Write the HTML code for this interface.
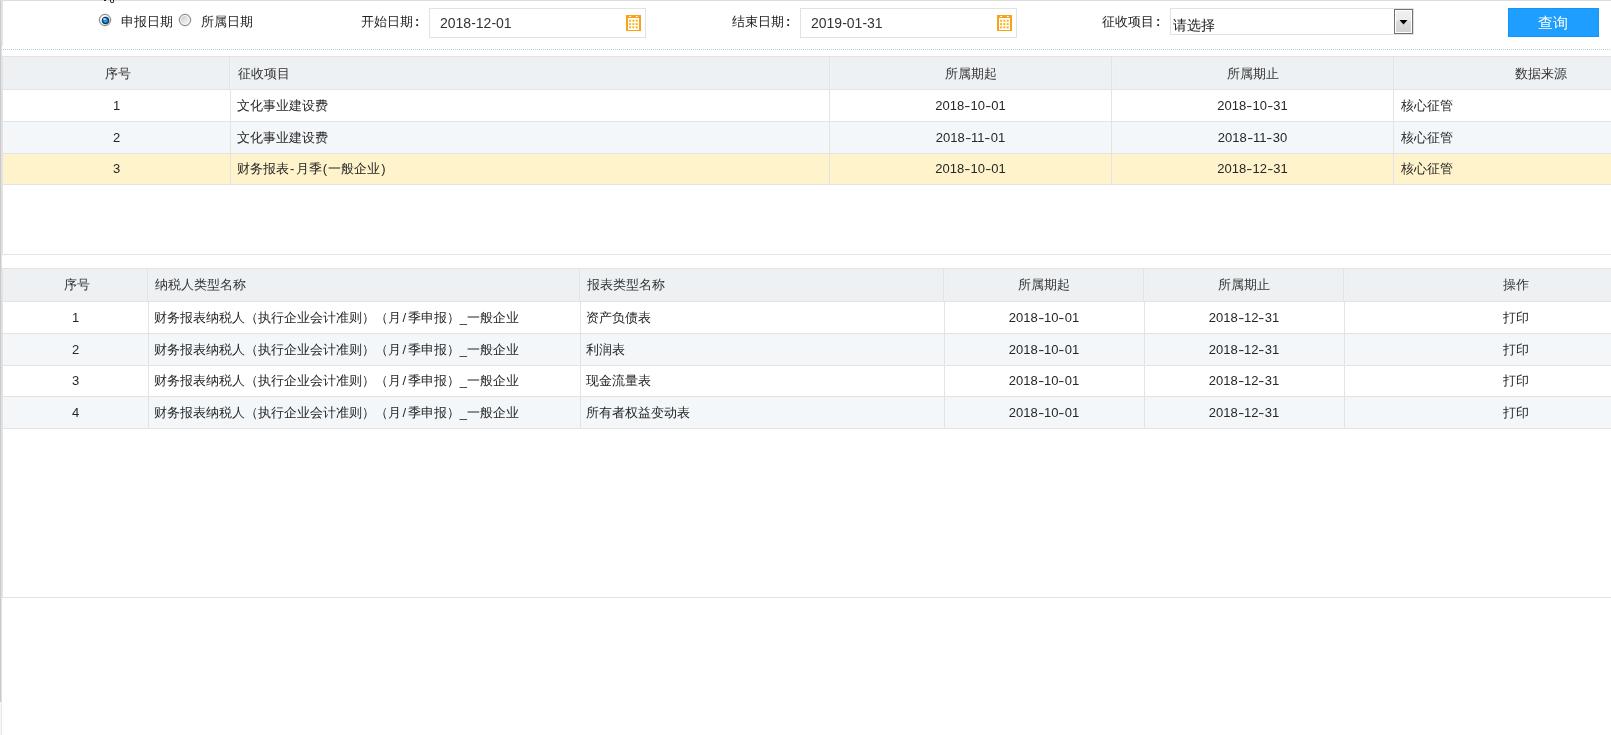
<!DOCTYPE html>
<html><head><meta charset="utf-8"><style>
html,body{margin:0;padding:0;width:1611px;height:735px;overflow:hidden;background:#fff;position:relative;font-family:"Liberation Sans",sans-serif}
.t{position:absolute;white-space:nowrap;overflow:visible}
#txt{position:absolute;left:0;top:0;width:1611px;height:735px;will-change:transform}
</style></head><body>
<div style="position:absolute;left:0px;top:0px;width:1px;height:702px;background:#cbcbcb"></div>
<div style="position:absolute;left:1px;top:0px;width:1px;height:702px;background:#e0e0e0"></div>
<div style="position:absolute;left:0px;top:702px;width:1px;height:33px;background:#f3f7fb"></div>
<div style="position:absolute;left:1px;top:702px;width:1px;height:33px;background:#e6e6e6"></div>
<div style="position:absolute;left:0px;top:0px;width:1611px;height:1px;background:#dcdcdc"></div>
<div style="position:absolute;left:2px;top:1px;width:1px;height:45px;background:#e6e6e6"></div>
<div style="position:absolute;left:3px;top:49px;width:1608px;height:1px;background:repeating-linear-gradient(90deg,#b2ced5 0 1px,transparent 1px 2px)"></div>
<div style="position:absolute;left:104px;top:0px;width:2px;height:1px;background:#1a1a30"></div>
<div style="position:absolute;left:110px;top:0px;width:4px;height:3px;border:1px solid #1a1a30;border-top:none;border-radius:0 0 2px 2px;box-sizing:border-box"></div>
<div style="position:absolute;left:99px;top:14px;width:12px;height:12px;border-radius:50%;box-sizing:border-box;border:1px solid #858585;background:#fff;box-shadow:0 0 0 0.5px rgba(130,130,130,.35)"></div>
<div style="position:absolute;left:100.5px;top:15.5px;width:9px;height:9px;border-radius:50%;background:radial-gradient(circle at 50% 50%,#1c8fe0 0,#2aa6f0 1.6px,#1b84d6 2.1px,#0d3a66 2.5px,#0c355e 3.4px,rgba(12,53,94,.35) 3.9px,transparent 4.4px)"></div>
<div style="position:absolute;left:103px;top:17.5px;width:2.5px;height:2px;border-radius:50%;background:rgba(200,240,255,.8)"></div>
<div style="position:absolute;left:179px;top:14px;width:12px;height:12px;border-radius:50%;box-sizing:border-box;border:1px solid #858585;box-shadow:0 0 0 0.5px rgba(130,130,130,.35);background:#fff"></div>
<div style="position:absolute;left:181px;top:16px;width:8px;height:8px;border-radius:50%;background:linear-gradient(135deg,#c3c8d1 0,#dfe2e6 45%,#f7f7f7 100%)"></div>
<div style="position:absolute;left:429px;top:8px;width:217px;height:30px;box-sizing:border-box;border:1px solid #e2e2e2;background:#fff"></div>
<svg style="position:absolute;left:626px;top:15px" width="15" height="16" viewBox="0 0 15 16">
<rect x="0" y="0" width="15" height="16" fill="#f8a21c"/>
<rect x="2" y="3" width="11" height="12" fill="#fff"/>
<rect x="3.3" y="1" width="1.8" height="1" fill="#fff"/><rect x="9.9" y="1" width="1.8" height="1" fill="#fff"/>
<g fill="#fab51c">
<rect x="3.1" y="4.7" width="2" height="2"/><rect x="6.4" y="4.7" width="2" height="2"/><rect x="9.7" y="4.7" width="2" height="2"/>
<rect x="3.1" y="8.1" width="2" height="2"/><rect x="6.4" y="8.1" width="2" height="2"/><rect x="9.7" y="8.1" width="2" height="2"/>
<rect x="3.1" y="11.4" width="2" height="2"/><rect x="6.4" y="11.4" width="2" height="2"/><rect x="9.7" y="11.4" width="2" height="2"/>
</g></svg>
<div style="position:absolute;left:800px;top:8px;width:217px;height:30px;box-sizing:border-box;border:1px solid #e2e2e2;background:#fff"></div>
<svg style="position:absolute;left:997px;top:15px" width="15" height="16" viewBox="0 0 15 16">
<rect x="0" y="0" width="15" height="16" fill="#f8a21c"/>
<rect x="2" y="3" width="11" height="12" fill="#fff"/>
<rect x="3.3" y="1" width="1.8" height="1" fill="#fff"/><rect x="9.9" y="1" width="1.8" height="1" fill="#fff"/>
<g fill="#fab51c">
<rect x="3.1" y="4.7" width="2" height="2"/><rect x="6.4" y="4.7" width="2" height="2"/><rect x="9.7" y="4.7" width="2" height="2"/>
<rect x="3.1" y="8.1" width="2" height="2"/><rect x="6.4" y="8.1" width="2" height="2"/><rect x="9.7" y="8.1" width="2" height="2"/>
<rect x="3.1" y="11.4" width="2" height="2"/><rect x="6.4" y="11.4" width="2" height="2"/><rect x="9.7" y="11.4" width="2" height="2"/>
</g></svg>
<div style="position:absolute;left:1170px;top:8px;width:244px;height:27px;box-sizing:border-box;border:1px solid #e2e2e2;background:#fff"></div>
<div style="position:absolute;left:1394px;top:9px;width:19px;height:25px;box-sizing:border-box;border:1px solid #707070;background:#fff"></div>
<div style="position:absolute;left:1396px;top:11px;width:15px;height:21px;background:linear-gradient(#efefef 0,#ececec 50%,#dcdcdc 50%,#d2d2d2 100%)"></div>
<svg style="position:absolute;left:1399px;top:20px" width="9" height="5" viewBox="0 0 9 5"><path d="M0.5 0 H8.5 L4.5 4.5 Z" fill="#000"/></svg>
<div style="position:absolute;left:1508px;top:8px;width:91px;height:29px;background:#1e9efe;box-sizing:border-box;border:1px solid #1497fd"></div>
<div style="position:absolute;left:2px;top:56px;width:1700px;height:199px;box-sizing:border-box;border:1px solid #e3e3e3;background:#fff"></div>
<div style="position:absolute;left:3px;top:57px;width:1700px;height:32px;background:#edf1f4"></div>
<div style="position:absolute;left:3px;top:89px;width:1700px;height:1px;background:#e3e3e3"></div>
<div style="position:absolute;left:229px;top:57px;width:1px;height:32px;background:#e3e3e3"></div>
<div style="position:absolute;left:230px;top:57px;width:1px;height:32px;background:#f0f3f6"></div>
<div style="position:absolute;left:829px;top:57px;width:1px;height:32px;background:#e3e3e3"></div>
<div style="position:absolute;left:830px;top:57px;width:1px;height:32px;background:#f0f3f6"></div>
<div style="position:absolute;left:1111px;top:57px;width:1px;height:32px;background:#e3e3e3"></div>
<div style="position:absolute;left:1112px;top:57px;width:1px;height:32px;background:#f0f3f6"></div>
<div style="position:absolute;left:1393px;top:57px;width:1px;height:32px;background:#e3e3e3"></div>
<div style="position:absolute;left:1394px;top:57px;width:1px;height:32px;background:#f0f3f6"></div>
<div style="position:absolute;left:3px;top:90px;width:1700px;height:31px;background:#fff"></div>
<div style="position:absolute;left:3px;top:121px;width:1700px;height:1px;background:#e3e3e3"></div>
<div style="position:absolute;left:230px;top:90px;width:1px;height:31px;background:#e3e3e3"></div>
<div style="position:absolute;left:829px;top:90px;width:1px;height:31px;background:#e3e3e3"></div>
<div style="position:absolute;left:1111px;top:90px;width:1px;height:31px;background:#e3e3e3"></div>
<div style="position:absolute;left:1393px;top:90px;width:1px;height:31px;background:#e3e3e3"></div>
<div style="position:absolute;left:3px;top:122px;width:1700px;height:31px;background:#f3f7fa"></div>
<div style="position:absolute;left:3px;top:153px;width:1700px;height:1px;background:#e3e3e3"></div>
<div style="position:absolute;left:230px;top:122px;width:1px;height:31px;background:#e3e3e3"></div>
<div style="position:absolute;left:829px;top:122px;width:1px;height:31px;background:#e3e3e3"></div>
<div style="position:absolute;left:1111px;top:122px;width:1px;height:31px;background:#e3e3e3"></div>
<div style="position:absolute;left:1393px;top:122px;width:1px;height:31px;background:#e3e3e3"></div>
<div style="position:absolute;left:3px;top:154px;width:1700px;height:30px;background:#fef3cb"></div>
<div style="position:absolute;left:3px;top:184px;width:1700px;height:1px;background:#e3e3e3"></div>
<div style="position:absolute;left:230px;top:154px;width:1px;height:30px;background:#e3e3e3"></div>
<div style="position:absolute;left:829px;top:154px;width:1px;height:30px;background:#e3e3e3"></div>
<div style="position:absolute;left:1111px;top:154px;width:1px;height:30px;background:#e3e3e3"></div>
<div style="position:absolute;left:1393px;top:154px;width:1px;height:30px;background:#e3e3e3"></div>
<div style="position:absolute;left:2px;top:268px;width:1700px;height:330px;box-sizing:border-box;border:1px solid #e3e3e3;background:#fff"></div>
<div style="position:absolute;left:3px;top:269px;width:1700px;height:32px;background:#edf1f4"></div>
<div style="position:absolute;left:3px;top:301px;width:1700px;height:1px;background:#e3e3e3"></div>
<div style="position:absolute;left:147px;top:269px;width:1px;height:32px;background:#e3e3e3"></div>
<div style="position:absolute;left:148px;top:269px;width:1px;height:32px;background:#f0f3f6"></div>
<div style="position:absolute;left:579px;top:269px;width:1px;height:32px;background:#e3e3e3"></div>
<div style="position:absolute;left:580px;top:269px;width:1px;height:32px;background:#f0f3f6"></div>
<div style="position:absolute;left:943px;top:269px;width:1px;height:32px;background:#e3e3e3"></div>
<div style="position:absolute;left:944px;top:269px;width:1px;height:32px;background:#f0f3f6"></div>
<div style="position:absolute;left:1143px;top:269px;width:1px;height:32px;background:#e3e3e3"></div>
<div style="position:absolute;left:1144px;top:269px;width:1px;height:32px;background:#f0f3f6"></div>
<div style="position:absolute;left:1343px;top:269px;width:1px;height:32px;background:#e3e3e3"></div>
<div style="position:absolute;left:1344px;top:269px;width:1px;height:32px;background:#f0f3f6"></div>
<div style="position:absolute;left:3px;top:302px;width:1700px;height:31px;background:#fff"></div>
<div style="position:absolute;left:3px;top:333px;width:1700px;height:1px;background:#e3e3e3"></div>
<div style="position:absolute;left:148px;top:302px;width:1px;height:31px;background:#e3e3e3"></div>
<div style="position:absolute;left:580px;top:302px;width:1px;height:31px;background:#e3e3e3"></div>
<div style="position:absolute;left:944px;top:302px;width:1px;height:31px;background:#e3e3e3"></div>
<div style="position:absolute;left:1144px;top:302px;width:1px;height:31px;background:#e3e3e3"></div>
<div style="position:absolute;left:1344px;top:302px;width:1px;height:31px;background:#e3e3e3"></div>
<div style="position:absolute;left:3px;top:334px;width:1700px;height:31px;background:#f3f7fa"></div>
<div style="position:absolute;left:3px;top:365px;width:1700px;height:1px;background:#e3e3e3"></div>
<div style="position:absolute;left:148px;top:334px;width:1px;height:31px;background:#e3e3e3"></div>
<div style="position:absolute;left:580px;top:334px;width:1px;height:31px;background:#e3e3e3"></div>
<div style="position:absolute;left:944px;top:334px;width:1px;height:31px;background:#e3e3e3"></div>
<div style="position:absolute;left:1144px;top:334px;width:1px;height:31px;background:#e3e3e3"></div>
<div style="position:absolute;left:1344px;top:334px;width:1px;height:31px;background:#e3e3e3"></div>
<div style="position:absolute;left:3px;top:366px;width:1700px;height:30px;background:#fff"></div>
<div style="position:absolute;left:3px;top:396px;width:1700px;height:1px;background:#e3e3e3"></div>
<div style="position:absolute;left:148px;top:366px;width:1px;height:30px;background:#e3e3e3"></div>
<div style="position:absolute;left:580px;top:366px;width:1px;height:30px;background:#e3e3e3"></div>
<div style="position:absolute;left:944px;top:366px;width:1px;height:30px;background:#e3e3e3"></div>
<div style="position:absolute;left:1144px;top:366px;width:1px;height:30px;background:#e3e3e3"></div>
<div style="position:absolute;left:1344px;top:366px;width:1px;height:30px;background:#e3e3e3"></div>
<div style="position:absolute;left:3px;top:397px;width:1700px;height:31px;background:#f3f7fa"></div>
<div style="position:absolute;left:3px;top:428px;width:1700px;height:1px;background:#e3e3e3"></div>
<div style="position:absolute;left:148px;top:397px;width:1px;height:31px;background:#e3e3e3"></div>
<div style="position:absolute;left:580px;top:397px;width:1px;height:31px;background:#e3e3e3"></div>
<div style="position:absolute;left:944px;top:397px;width:1px;height:31px;background:#e3e3e3"></div>
<div style="position:absolute;left:1144px;top:397px;width:1px;height:31px;background:#e3e3e3"></div>
<div style="position:absolute;left:1344px;top:397px;width:1px;height:31px;background:#e3e3e3"></div>
<div id="txt">
<div class="t" style="left:121px;top:10px;width:60px;height:24px;line-height:24px;text-align:left;font-size:13px;color:#222">申报日期</div>
<div class="t" style="left:201px;top:10px;width:60px;height:24px;line-height:24px;text-align:left;font-size:13px;color:#222">所属日期</div>
<div class="t" style="left:361px;top:10px;width:70px;height:24px;line-height:24px;text-align:left;font-size:13px;color:#222">开始日期<span style="padding-left:2px;font-weight:bold">:</span></div>
<div class="t" style="left:732px;top:10px;width:70px;height:24px;line-height:24px;text-align:left;font-size:13px;color:#222">结束日期<span style="padding-left:2px;font-weight:bold">:</span></div>
<div class="t" style="left:1102px;top:10px;width:70px;height:24px;line-height:24px;text-align:left;font-size:13px;color:#222">征收项目<span style="padding-left:2px;font-weight:bold">:</span></div>
<div class="t" style="left:440px;top:9px;width:150px;height:28px;line-height:28px;text-align:left;font-size:14px;color:#333">2018-12-01</div>
<div class="t" style="left:811px;top:9px;width:150px;height:28px;line-height:28px;text-align:left;font-size:14px;color:#333">2019-01-31</div>
<div class="t" style="left:1173px;top:13px;width:100px;height:24px;line-height:24px;text-align:left;font-size:14px;color:#222">请选择</div>
<div class="t" style="left:1507px;top:8px;width:91px;height:29px;line-height:29px;text-align:center;font-size:15px;color:#fff">查询</div>
<div class="t" style="left:5px;top:58px;width:226px;height:32px;line-height:32px;text-align:center;font-size:13px;color:#333">序号</div>
<div class="t" style="left:238px;top:58px;width:400px;height:32px;line-height:32px;text-align:left;font-size:13px;color:#333">征收项目</div>
<div class="t" style="left:830px;top:58px;width:281px;height:32px;line-height:32px;text-align:center;font-size:13px;color:#333">所属期起</div>
<div class="t" style="left:1112px;top:58px;width:281px;height:32px;line-height:32px;text-align:center;font-size:13px;color:#333">所属期止</div>
<div class="t" style="left:1394px;top:58px;width:293px;height:32px;line-height:32px;text-align:center;font-size:13px;color:#333">数据来源</div>
<div class="t" style="left:3px;top:90px;width:227px;height:31px;line-height:31px;text-align:center;font-size:13px;color:#262626">1</div>
<div class="t" style="left:237px;top:90px;width:500px;height:31px;line-height:31px;text-align:left;font-size:13px;color:#262626">文化事业建设费</div>
<div class="t" style="left:830px;top:90px;width:281px;height:31px;line-height:31px;text-align:center;font-size:13px;color:#262626">2018<span style="display:inline-block;margin:0 1px;transform:scaleX(1.4)">-</span>10<span style="display:inline-block;margin:0 1px;transform:scaleX(1.4)">-</span>01</div>
<div class="t" style="left:1112px;top:90px;width:281px;height:31px;line-height:31px;text-align:center;font-size:13px;color:#262626">2018<span style="display:inline-block;margin:0 1px;transform:scaleX(1.4)">-</span>10<span style="display:inline-block;margin:0 1px;transform:scaleX(1.4)">-</span>31</div>
<div class="t" style="left:1401px;top:90px;width:200px;height:31px;line-height:31px;text-align:left;font-size:13px;color:#262626">核心征管</div>
<div class="t" style="left:3px;top:122px;width:227px;height:31px;line-height:31px;text-align:center;font-size:13px;color:#262626">2</div>
<div class="t" style="left:237px;top:122px;width:500px;height:31px;line-height:31px;text-align:left;font-size:13px;color:#262626">文化事业建设费</div>
<div class="t" style="left:830px;top:122px;width:281px;height:31px;line-height:31px;text-align:center;font-size:13px;color:#262626">2018<span style="display:inline-block;margin:0 1px;transform:scaleX(1.4)">-</span>11<span style="display:inline-block;margin:0 1px;transform:scaleX(1.4)">-</span>01</div>
<div class="t" style="left:1112px;top:122px;width:281px;height:31px;line-height:31px;text-align:center;font-size:13px;color:#262626">2018<span style="display:inline-block;margin:0 1px;transform:scaleX(1.4)">-</span>11<span style="display:inline-block;margin:0 1px;transform:scaleX(1.4)">-</span>30</div>
<div class="t" style="left:1401px;top:122px;width:200px;height:31px;line-height:31px;text-align:left;font-size:13px;color:#262626">核心征管</div>
<div class="t" style="left:3px;top:154px;width:227px;height:30px;line-height:30px;text-align:center;font-size:13px;color:#262626">3</div>
<div class="t" style="left:237px;top:154px;width:500px;height:30px;line-height:30px;text-align:left;font-size:13px;color:#262626">财务报表<span style="padding:0 1.1px">-</span>月季<span style="padding:0 1.1px">(</span>一般企业<span style="padding:0 1.1px">)</span></div>
<div class="t" style="left:830px;top:154px;width:281px;height:30px;line-height:30px;text-align:center;font-size:13px;color:#262626">2018<span style="display:inline-block;margin:0 1px;transform:scaleX(1.4)">-</span>10<span style="display:inline-block;margin:0 1px;transform:scaleX(1.4)">-</span>01</div>
<div class="t" style="left:1112px;top:154px;width:281px;height:30px;line-height:30px;text-align:center;font-size:13px;color:#262626">2018<span style="display:inline-block;margin:0 1px;transform:scaleX(1.4)">-</span>12<span style="display:inline-block;margin:0 1px;transform:scaleX(1.4)">-</span>31</div>
<div class="t" style="left:1401px;top:154px;width:200px;height:30px;line-height:30px;text-align:left;font-size:13px;color:#262626">核心征管</div>
<div class="t" style="left:5px;top:269px;width:144px;height:32px;line-height:32px;text-align:center;font-size:13px;color:#333">序号</div>
<div class="t" style="left:155px;top:269px;width:400px;height:32px;line-height:32px;text-align:left;font-size:13px;color:#333">纳税人类型名称</div>
<div class="t" style="left:587px;top:269px;width:300px;height:32px;line-height:32px;text-align:left;font-size:13px;color:#333">报表类型名称</div>
<div class="t" style="left:944px;top:269px;width:199px;height:32px;line-height:32px;text-align:center;font-size:13px;color:#333">所属期起</div>
<div class="t" style="left:1144px;top:269px;width:199px;height:32px;line-height:32px;text-align:center;font-size:13px;color:#333">所属期止</div>
<div class="t" style="left:1344px;top:269px;width:343px;height:32px;line-height:32px;text-align:center;font-size:13px;color:#333">操作</div>
<div class="t" style="left:3px;top:302px;width:145px;height:31px;line-height:31px;text-align:center;font-size:13px;color:#262626">1</div>
<div class="t" style="left:154px;top:302px;width:420px;height:31px;line-height:31px;text-align:left;font-size:13px;color:#262626">财务报表纳税人（执行企业会计准则）（月<span style="padding:0 1.5px">/</span>季申报）_一般企业</div>
<div class="t" style="left:586px;top:302px;width:300px;height:31px;line-height:31px;text-align:left;font-size:13px;color:#262626">资产负债表</div>
<div class="t" style="left:944px;top:302px;width:200px;height:31px;line-height:31px;text-align:center;font-size:13px;color:#262626">2018<span style="display:inline-block;margin:0 1px;transform:scaleX(1.4)">-</span>10<span style="display:inline-block;margin:0 1px;transform:scaleX(1.4)">-</span>01</div>
<div class="t" style="left:1144px;top:302px;width:200px;height:31px;line-height:31px;text-align:center;font-size:13px;color:#262626">2018<span style="display:inline-block;margin:0 1px;transform:scaleX(1.4)">-</span>12<span style="display:inline-block;margin:0 1px;transform:scaleX(1.4)">-</span>31</div>
<div class="t" style="left:1344px;top:302px;width:343px;height:31px;line-height:31px;text-align:center;font-size:13px;color:#262626">打印</div>
<div class="t" style="left:3px;top:334px;width:145px;height:31px;line-height:31px;text-align:center;font-size:13px;color:#262626">2</div>
<div class="t" style="left:154px;top:334px;width:420px;height:31px;line-height:31px;text-align:left;font-size:13px;color:#262626">财务报表纳税人（执行企业会计准则）（月<span style="padding:0 1.5px">/</span>季申报）_一般企业</div>
<div class="t" style="left:586px;top:334px;width:300px;height:31px;line-height:31px;text-align:left;font-size:13px;color:#262626">利润表</div>
<div class="t" style="left:944px;top:334px;width:200px;height:31px;line-height:31px;text-align:center;font-size:13px;color:#262626">2018<span style="display:inline-block;margin:0 1px;transform:scaleX(1.4)">-</span>10<span style="display:inline-block;margin:0 1px;transform:scaleX(1.4)">-</span>01</div>
<div class="t" style="left:1144px;top:334px;width:200px;height:31px;line-height:31px;text-align:center;font-size:13px;color:#262626">2018<span style="display:inline-block;margin:0 1px;transform:scaleX(1.4)">-</span>12<span style="display:inline-block;margin:0 1px;transform:scaleX(1.4)">-</span>31</div>
<div class="t" style="left:1344px;top:334px;width:343px;height:31px;line-height:31px;text-align:center;font-size:13px;color:#262626">打印</div>
<div class="t" style="left:3px;top:366px;width:145px;height:30px;line-height:30px;text-align:center;font-size:13px;color:#262626">3</div>
<div class="t" style="left:154px;top:366px;width:420px;height:30px;line-height:30px;text-align:left;font-size:13px;color:#262626">财务报表纳税人（执行企业会计准则）（月<span style="padding:0 1.5px">/</span>季申报）_一般企业</div>
<div class="t" style="left:586px;top:366px;width:300px;height:30px;line-height:30px;text-align:left;font-size:13px;color:#262626">现金流量表</div>
<div class="t" style="left:944px;top:366px;width:200px;height:30px;line-height:30px;text-align:center;font-size:13px;color:#262626">2018<span style="display:inline-block;margin:0 1px;transform:scaleX(1.4)">-</span>10<span style="display:inline-block;margin:0 1px;transform:scaleX(1.4)">-</span>01</div>
<div class="t" style="left:1144px;top:366px;width:200px;height:30px;line-height:30px;text-align:center;font-size:13px;color:#262626">2018<span style="display:inline-block;margin:0 1px;transform:scaleX(1.4)">-</span>12<span style="display:inline-block;margin:0 1px;transform:scaleX(1.4)">-</span>31</div>
<div class="t" style="left:1344px;top:366px;width:343px;height:30px;line-height:30px;text-align:center;font-size:13px;color:#262626">打印</div>
<div class="t" style="left:3px;top:397px;width:145px;height:31px;line-height:31px;text-align:center;font-size:13px;color:#262626">4</div>
<div class="t" style="left:154px;top:397px;width:420px;height:31px;line-height:31px;text-align:left;font-size:13px;color:#262626">财务报表纳税人（执行企业会计准则）（月<span style="padding:0 1.5px">/</span>季申报）_一般企业</div>
<div class="t" style="left:586px;top:397px;width:300px;height:31px;line-height:31px;text-align:left;font-size:13px;color:#262626">所有者权益变动表</div>
<div class="t" style="left:944px;top:397px;width:200px;height:31px;line-height:31px;text-align:center;font-size:13px;color:#262626">2018<span style="display:inline-block;margin:0 1px;transform:scaleX(1.4)">-</span>10<span style="display:inline-block;margin:0 1px;transform:scaleX(1.4)">-</span>01</div>
<div class="t" style="left:1144px;top:397px;width:200px;height:31px;line-height:31px;text-align:center;font-size:13px;color:#262626">2018<span style="display:inline-block;margin:0 1px;transform:scaleX(1.4)">-</span>12<span style="display:inline-block;margin:0 1px;transform:scaleX(1.4)">-</span>31</div>
<div class="t" style="left:1344px;top:397px;width:343px;height:31px;line-height:31px;text-align:center;font-size:13px;color:#262626">打印</div>
</div>
</body></html>
